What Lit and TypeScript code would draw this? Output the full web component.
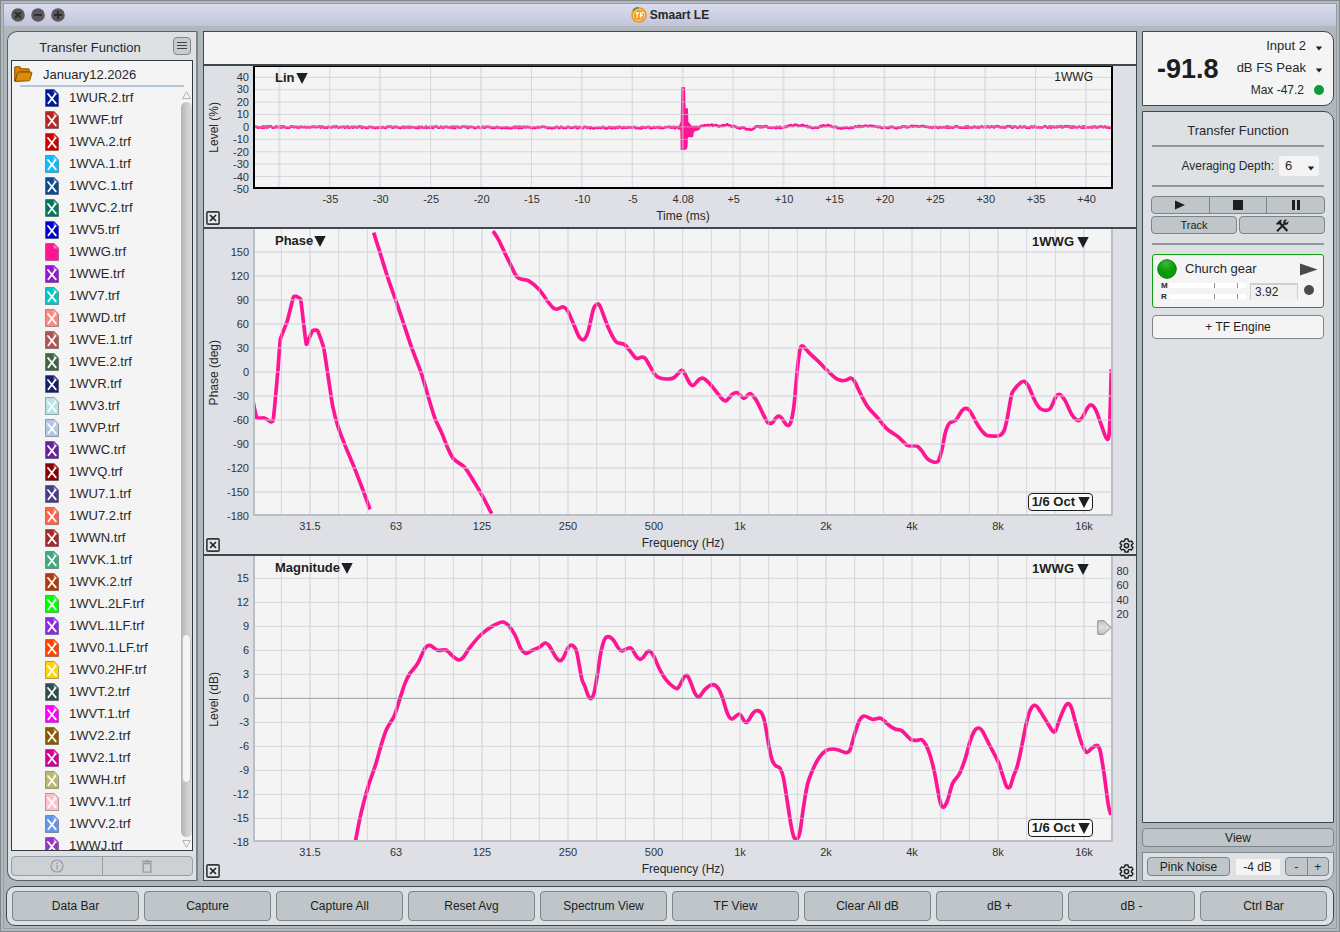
import { LitElement, html, svg, css, nothing } from "lit";
import { customElement, property } from "lit/decorators.js";

type Pt = [number, number];
interface Tick { at: number; label: string; }
interface GridLine { at: number; kind: "major" | "minor" | "zero"; }
interface ChartSpec {
  menu: string;
  yTitle: string;
  xTitle: string;
  w: number;
  h: number;
  xLines: GridLine[];
  yLines: GridLine[];
  xTicks: Tick[];
  yTicks: Tick[];
  rightTicks?: Tick[];
  traces: string[];
  fill?: string;
  impulse?: boolean;
}

/* ---------- trace data ---------- */

const phaseLow: Pt[] = [[-5,521],[5,566],[28,567],[47,578],[54,576],[60,521],[69,421],[76,331],[97,276],[115,205],[123,202],[137,211],[145,276],[154,346],[163,326],[173,305],[188,305],[206,356],[217,426],[233,531],[250,596],[275,661],[300,721],[325,786],[345,841]];
const phaseMid: Pt[] = [[356,11],[375,71],[400,151],[423,216],[440,266],[470,356],[500,436],[525,521],[541,571],[560,611],[580,661],[597,691],[630,716],[660,763],[685,806],[710,854]];
const phaseHigh: Pt[] = [[714,6],[730,31],[750,73],[770,114],[785,143],[800,151],[820,155],[853,182],[875,213],[895,237],[907,240],[925,234],[940,249],[970,319],[980,331],[990,329],[1000,306],[1015,241],[1025,227],[1035,231],[1060,296],[1083,338],[1110,348],[1140,385],[1150,388],[1162,384],[1173,391],[1200,437],[1215,447],[1240,450],[1257,446],[1280,424],[1290,436],[1305,464],[1315,469],[1333,451],[1345,448],[1365,465],[1390,496],[1405,513],[1415,514],[1433,495],[1447,491],[1467,508],[1485,494],[1505,516],[1533,573],[1543,583],[1552,581],[1568,562],[1580,567],[1593,586],[1603,588],[1611,566],[1618,521],[1627,421],[1635,363],[1643,351],[1665,374],[1695,402],[1715,423],[1740,446],[1760,455],[1775,453],[1787,447],[1798,456],[1820,501],[1840,536],[1865,563],[1895,599],[1930,624],[1957,649],[1985,651],[2000,665],[2017,689],[2035,699],[2050,696],[2061,661],[2071,611],[2083,583],[2103,573],[2120,546],[2132,538],[2145,546],[2170,591],[2192,617],[2210,621],[2235,619],[2248,603],[2258,561],[2270,496],[2280,479],[2295,463],[2307,457],[2320,471],[2340,516],[2355,538],[2373,544],[2387,537],[2403,503],[2415,497],[2430,514],[2450,556],[2467,574],[2480,568],[2498,536],[2509,528],[2523,544],[2540,591],[2553,626],[2560,628],[2564,591],[2569,421]];
const magnitude: Pt[] = [[302,852],[318,772],[340,690],[363,622],[380,562],[395,519],[418,479],[435,427],[450,382],[465,352],[487,324],[510,277],[525,268],[548,283],[573,282],[597,304],[612,312],[625,304],[645,274],[680,234],[715,209],[743,198],[760,208],[780,237],[797,277],[813,292],[830,284],[853,274],[870,261],[883,270],[903,304],[915,314],[925,305],[940,274],[952,268],[965,287],[980,367],[990,392],[1000,420],[1008,428],[1017,412],[1027,357],[1037,292],[1048,252],[1060,242],[1075,252],[1090,276],[1100,285],[1127,276],[1145,302],[1155,310],[1165,304],[1177,287],[1187,287],[1197,302],[1215,342],[1235,374],[1257,394],[1268,397],[1280,377],[1288,362],[1298,360],[1308,382],[1320,412],[1332,423],[1350,400],[1372,386],[1390,397],[1403,427],[1417,472],[1430,489],[1453,474],[1467,494],[1477,498],[1495,470],[1507,464],[1520,472],[1530,502],[1542,572],[1552,614],[1562,629],[1575,637],[1585,664],[1595,724],[1608,807],[1617,844],[1627,848],[1635,827],[1645,757],[1657,687],[1673,642],[1693,604],[1714,583],[1733,579],[1750,582],[1773,590],[1785,582],[1798,537],[1813,494],[1827,480],[1853,490],[1877,487],[1900,506],[1920,519],[1940,524],[1967,550],[1985,553],[2000,551],[2013,567],[2025,597],[2038,647],[2053,727],[2060,750],[2068,752],[2078,732],[2093,682],[2113,654],[2130,610],[2145,557],[2158,525],[2170,516],[2182,525],[2205,570],[2230,619],[2245,664],[2255,692],[2265,693],[2275,662],[2287,630],[2300,572],[2313,507],[2325,464],[2338,448],[2350,457],[2375,497],[2392,524],[2401,525],[2415,487],[2430,452],[2440,443],[2450,457],[2465,512],[2480,562],[2495,589],[2510,577],[2525,568],[2535,582],[2547,652],[2560,747],[2568,777]];

/** Cubic spline through the points; a larger tension keeps it closer to straight segments. */
function smooth(p: Pt[], tension = 7): string {
  let d = `M${p[0][0]} ${p[0][1]}`;
  for (let i = 0; i < p.length - 1; i++) {
    const a = p[Math.max(i - 1, 0)], b = p[i], c = p[i + 1], e = p[Math.min(i + 2, p.length - 1)];
    const x1 = b[0] + (c[0] - a[0]) / tension, y1 = b[1] + (c[1] - a[1]) / tension;
    const x2 = c[0] - (e[0] - b[0]) / tension, y2 = c[1] - (e[1] - b[1]) / tension;
    d += `C${x1.toFixed(1)} ${y1.toFixed(1)} ${x2.toFixed(1)} ${y2.toFixed(1)} ${c[0]} ${c[1]}`;
  }
  return d;
}

/** Noise floor of the impulse response, following its slow drift after the peak. */
function noiseFloor(): string {
  const drift: Pt[] = [[0,180],[1330,182],[1345,176],[1360,173],[1375,175],[1390,177],[1415,174],[1435,178],[1450,185],[1465,182],[1487,188],[1505,180],[1530,178],[1550,182],[1590,181],[1610,175],[1645,176],[1675,184],[1700,177],[1720,176],[1750,182],[1775,184],[1800,179],[1850,178],[1880,181],[1925,182],[1975,178],[2040,181],[2100,180],[2568,180]];
  let seed = 7;
  let d = "";
  for (let x = 0; x <= 2568; x += 3) {
    const i = drift.findIndex((q) => q[0] >= x);
    const b = drift[i], a = drift[Math.max(i - 1, 0)];
    const t = b[0] === a[0] ? 0 : (x - a[0]) / (b[0] - a[0]);
    seed = (seed * 1103515245 + 12345) % 2147483648;
    const n = (seed / 2147483648 - 0.5) * 5;
    d += `${d ? "L" : "M"}${x} ${(a[1] + (b[1] - a[1]) * t + n).toFixed(1)}`;
  }
  return d;
}

const range = (n: number) => Array.from({ length: n }, (_, i) => i);
const octaveLines: GridLine[] = range(29).map((k) => ({ at: 79 + 86 * k, kind: k % 3 === 1 ? "major" : "minor" }));
const octaveTicks: Tick[] = ["31.5", "63", "125", "250", "500", "1k", "2k", "4k", "8k", "16k"].map((label, i) => ({ at: 165 + 258 * i, label }));

const impulseChart: ChartSpec = {
  menu: "Lin", yTitle: "Level (%)", xTitle: "Time (ms)", w: 2568, h: 360, impulse: true,
  xLines: range(17).map((k) => ({ at: 73 + 151.25 * k, kind: k % 2 ? "minor" : "major" })),
  yLines: range(9).map((k) => ({ at: 31 + 37.2 * k, kind: "minor" })),
  xTicks: ["-35", "-30", "-25", "-20", "-15", "-10", "-5", "4.08", "+5", "+10", "+15", "+20", "+25", "+30", "+35", "+40"].map((label, i) => ({ at: 226 + 151.25 * i, label })),
  yTicks: range(10).map((k) => ({ at: 32 + 37.2 * k, label: String(40 - 10 * k) })),
  traces: [noiseFloor()],
  fill: "M1272 176 1277 165 1279 60H1290L1292 124H1299L1300 164 1310 176H1330L1333 189 1317 194 1314 211H1299L1297 244 1290 249H1277L1276 190Z",
};
const phaseChart: ChartSpec = {
  menu: "Phase", yTitle: "Phase (deg)", xTitle: "Frequency (Hz)", w: 2568, h: 855,
  xLines: octaveLines,
  yLines: range(11).map((k) => ({ at: 69 + 72 * k, kind: "major" })),
  xTicks: octaveTicks,
  yTicks: range(12).map((k) => ({ at: 69 + 72 * k, label: String(150 - 30 * k) })),
  traces: [smooth(phaseLow, 20), smooth(phaseMid), smooth(phaseHigh)],
};
const magnitudeChart: ChartSpec = {
  menu: "Magnitude", yTitle: "Level (dB)", xTitle: "Frequency (Hz)", w: 2568, h: 852,
  xLines: octaveLines,
  yLines: range(11).map((k) => ({ at: 67 + 72 * k, kind: k === 5 ? "zero" : "minor" })),
  xTicks: octaveTicks,
  yTicks: range(12).map((k) => ({ at: 67 + 72 * k, label: String(15 - 3 * k) })),
  rightTicks: [{ at: 46, label: "80" }, { at: 88, label: "60" }, { at: 132, label: "40" }, { at: 174, label: "20" }],
  traces: [smooth(magnitude)],
};

const files: [string, string][] = [
  ["1WUR.2.trf", "#00189a"], ["1WWF.trf", "#b82525"], ["1WVA.2.trf", "#cf0000"], ["1WVA.1.trf", "#0cbcff"],
  ["1WVC.1.trf", "#0c4a92"], ["1WVC.2.trf", "#00785c"], ["1WV5.trf", "#0000cd"], ["1WWG.trf", "#ff1493"],
  ["1WWE.trf", "#9417d2"], ["1WV7.trf", "#08c4c4"], ["1WWD.trf", "#fc8a84"], ["1WVE.1.trf", "#b05454"],
  ["1WVE.2.trf", "#3f6844"], ["1WVR.trf", "#14206e"], ["1WV3.trf", "#b4e6e6"], ["1WVP.trf", "#b3c6e2"],
  ["1WWC.trf", "#6a1f9e"], ["1WVQ.trf", "#8b0000"], ["1WU7.1.trf", "#483d8b"], ["1WU7.2.trf", "#ff6347"],
  ["1WWN.trf", "#a52a2a"], ["1WVK.1.trf", "#3cab80"], ["1WVK.2.trf", "#b03a08"], ["1WVL.2LF.trf", "#00ff00"],
  ["1WVL.1LF.trf", "#8a2be2"], ["1WV0.1.LF.trf", "#ff4500"], ["1WV0.2HF.trf", "#ffd700"], ["1WVT.2.trf", "#2f4f4f"],
  ["1WVT.1.trf", "#ff00ff"], ["1WV2.2.trf", "#8b5a00"], ["1WV2.1.trf", "#d0009a"], ["1WWH.trf", "#bdb76b"],
  ["1WVV.1.trf", "#ffc0cb"], ["1WVV.2.trf", "#6495ed"], ["1WWJ.trf", "#9932cc"],
];

const base = css`
  *, *::before, *::after { box-sizing: border-box; }
  button, select, input {
    font: inherit; color: inherit; margin: 0; padding: 0; border: 0; background: none; border-radius: 0;
    appearance: none;
  }
  svg { display: block; }
`;

const downTriangle = html`<svg width="12" height="11" viewBox="0 0 12 11" aria-hidden="true"><path d="M.3 0h11.4L6 11z" fill="#1c1e20"/></svg>`;
const caret = html`<svg class="caret" width="8" height="5" viewBox="0 0 8 5" aria-hidden="true"><path d="M.8.6h6.400L4 4.600z" fill="#1c1e20"/></svg>`;

@customElement("chart-panel")
class ChartPanel extends LitElement {
  @property({ attribute: false }) spec!: ChartSpec;

  static styles = [base, css`
    :host {
      display: grid; min-height: 0; background: #dfe0e5; color: #26292c; font-size: 12px; line-height: 14px;
      grid-template: minmax(0, 1fr) 20px 18px / 20px 29px minmax(0, 1fr) 23px;
    }
    .ytitle { writing-mode: vertical-rl; transform: rotate(180deg); place-self: center; white-space: nowrap; }
    .axis { width: 100%; height: 100%; overflow: visible; font-size: 11px; fill: #303336; }
    .yaxis { padding-bottom: 2px; min-height: 0; }
    .right { padding-right: 4px; }
    .plot { position: relative; min-height: 0; background: #f4f4f4; border: 2px solid #bbbec3; border-top: 0; }
    .plot.impulse { border: 2px solid #000; border-top-width: 1px; }
    .graph { width: 100%; height: 100%; overflow: hidden; }
    .trace { fill: none; stroke: #ff1493; stroke-width: 3.7; stroke-linejoin: round; vector-effect: non-scaling-stroke; }
    .impulse .trace { stroke-width: 2.6; }
    .body { fill: #ff1493; }
    .major, .minor, .zero { vector-effect: non-scaling-stroke; }
    .major { stroke: rgba(205, 207, 220, .5); stroke-width: 2; }
    .minor { stroke: rgba(196, 201, 210, .65); stroke-width: 1; }
    .zero { stroke: #9a9fa6; stroke-width: 1; }
    .xaxis { grid-column: 3; padding: 0 2px; }
    .corner { grid-column: 1; place-self: center end; width: 14px; height: 14px; margin-right: 4px; }
    .xtitle { grid-column: 3; justify-self: center; }
    .gear { grid-column: 4; place-self: center end; margin-right: 2px; }
    .menu, .source, .octave { position: absolute; display: flex; align-items: center; gap: 1px; font-size: 13px; line-height: 16px; font-weight: bold; color: #1c1e20; white-space: nowrap; }
    .menu { left: 20px; top: 4px; }
    .source { right: 22px; top: 5px; gap: 3px; }
    .impulse .menu { top: 3px; }
    .impulse .source { right: 18px; top: 2px; font-size: 12px; font-weight: normal; }
    .octave { right: 18px; bottom: 3px; height: 18px; padding: 0 2px 0 3px; gap: 3px; border: 1px solid #1c1e20; border-radius: 4px; background: #fafafa; }
    .marker { position: absolute; right: -1px; top: 64px; }
  `];

  render() {
    const s = this.spec;
    const pct = (v: number, of: number) => `${((v / of) * 100).toFixed(3)}%`;
    return html`
      <div class="ytitle">${s.yTitle}</div>
      <div class="yaxis"><svg class="axis">
        ${s.yTicks.map((t) => svg`<text x="25" y=${pct(t.at, s.h)} dy="4" text-anchor="end">${t.label}</text>`)}
      </svg></div>
      <div class="plot ${s.impulse ? "impulse" : ""}">
        <svg class="graph" viewBox="0 0 ${s.w} ${s.h}" preserveAspectRatio="none" role="img" aria-label="${s.menu} trace">
          ${s.fill ? svg`<path class="body" d=${s.fill}/>` : nothing}
          ${s.traces.map((d) => svg`<path class="trace" d=${d}/>`)}
          ${s.xLines.map((l) => svg`<line class=${l.kind} x1=${l.at} x2=${l.at} y1="0" y2=${s.h}/>`)}
          ${s.yLines.map((l) => svg`<line class=${l.kind} x1="0" x2=${s.w} y1=${l.at} y2=${l.at}/>`)}
        </svg>
        <button class="menu">${s.menu}${downTriangle}</button>
        ${s.impulse
          ? html`<span class="source">1WWG</span>`
          : html`<button class="source">1WWG${downTriangle}</button><button class="octave">1/6 Oct${downTriangle}</button>`}
        ${s.rightTicks ? html`<svg class="marker" width="15" height="15" viewBox="0 0 15 15" aria-hidden="true">
          <defs><linearGradient id="m" x2="0" y2="1"><stop offset="0" stop-color="#c4c6c6"/><stop offset=".5" stop-color="#dcdddd"/><stop offset="1" stop-color="#c2c4c4"/></linearGradient></defs>
          <path d="M.8.8H7l7 6.700L7 14.200H.8z" fill="url(#m)" stroke="#85898a"/></svg>` : nothing}
      </div>
      <div class="yaxis right">${s.rightTicks ? html`<svg class="axis">
        ${s.rightTicks.map((t) => svg`<text x="50%" y=${pct(t.at, s.h)} dy="4" text-anchor="middle">${t.label}</text>`)}
      </svg>` : nothing}</div>
      <div class="xaxis"><svg class="axis">
        ${s.xTicks.map((t) => svg`<text x=${pct(t.at, s.w)} y="14" text-anchor="middle">${t.label}</text>`)}
      </svg></div>
      <button class="corner" aria-label="Close plot"><svg width="14" height="14" viewBox="0 0 14 14"><rect x=".9" y=".9" width="12.200" height="12.200" rx="1.200" fill="#e6e7eb" stroke="#33383b" stroke-width="1.600"/><path d="M4 4l6 6M10 4l-6 6" stroke="#1f2224" stroke-width="1.700"/></svg></button>
      <div class="xtitle">${s.xTitle}</div>
      ${s.impulse ? nothing : html`<button class="gear" aria-label="Plot settings"><svg width="15" height="15" viewBox="0 0 24 24" fill="none" stroke="#1f2224" stroke-width="2.400" stroke-linejoin="round"><path d="M9.700 1.500h4.600l.7 3.100 2 1.200 3.100-1 2.300 4-2.400 2.100v2.200l2.400 2.100-2.300 4-3.100-1-2 1.200-.7 3.100H9.700L9 19.400l-2-1.200-3.100 1-2.300-4L4 13.100v-2.200L1.600 8.800l2.300-4 3.100 1 2-1.200z"/><circle cx="12" cy="12" r="3.400"/></svg></button>`}
    `;
  }
}

@customElement("file-browser")
class FileBrowser extends LitElement {
  static styles = [base, css`
    :host {
      display: flex; flex-direction: column; min-height: 0; padding: 0 3px 4px; background: #dde1e4;
      border: 1px solid #566065; border-right: 2px solid #7c868b; border-radius: 10px 0 0 10px; font-size: 13px; color: #26292c;
    }
    .head { display: flex; align-items: center; height: 28px; padding: 0 2px 0 0; }
    h2 { flex: 1; margin: 0; text-align: center; font-size: 13px; font-weight: normal; line-height: 16px; padding: 3px 4px 0 0; }
    .menu { width: 18px; height: 18px; border: 1px solid #7c868b; border-radius: 4px; background: #c6ccd0; display: grid; place-content: center; }
    .box { flex: 1; min-height: 0; display: flex; flex-direction: column; border: 1px solid #333b3f; background: #f4f4f4; }
    .folder { display: flex; align-items: center; gap: 10px; height: 26px; padding-left: 2px; }
    .folder-wrap::after { content: ""; display: block; height: 2px; margin: -2px 8px 0; background: #b6c6de; }
    .scroller { flex: 1; min-height: 0; display: flex; }
    ul { flex: 1; min-height: 0; overflow: hidden; list-style: none; margin: 0; padding: 0 0 0 33px; }
    li { display: flex; align-items: center; gap: 10px; height: 22px; line-height: 22px; white-space: nowrap; }
    .bar { width: 12px; display: flex; flex-direction: column; align-items: center; padding: 4px 0 2px; gap: 3px; }
    .track { flex: 1; width: 11px; border-radius: 6px; background: linear-gradient(90deg, #b4b4b4, #cfcfcf 60%, #dcdcdc); display: flex; flex-direction: column; align-items: center; }
    .track::before { content: ""; flex: 533; }
    .track::after { content: ""; flex: 54; }
    .thumb { flex: 148; width: 9px; border-radius: 5px; background: #f4f4f4; border: 1px solid #c3c3c3; }
    .actions { display: flex; height: 20px; margin-top: 5px; border: 1px solid #979fa3; border-radius: 4px; background: #ccd1d5; }
    .actions button { flex: 1; display: grid; place-items: center; }
    .actions button + button { border-left: 1px solid #979fa3; }
  `];

  render() {
    return html`
      <div class="head"><h2>Transfer Function</h2>
        <button class="menu" aria-label="Menu"><svg width="10" height="8"><path d="M0 .5h10M0 3.500h10M0 6.500h10" stroke="#3d4447" stroke-width="1"/></svg></button>
      </div>
      <div class="box">
        <div class="folder-wrap"><div class="folder">
          <svg width="19" height="17" viewBox="0 0 19 17" aria-hidden="true"><path d="M.7 15.300V1.600q0-.9.900-.9h4.100q.8 0 .9.900v1.200h7.800q.9 0 .9.900v2.200H5.800q-1 0-1.300.8z" fill="#d98200" stroke="#8a5200" stroke-linejoin="round"/><path d="M1.200 15.500 3.400 7q.3-.9 1.200-.9h12.600q.9 0 .7.900l-2 6.800q-.3.900-1.200 1z" fill="#dd8a0a" stroke="#8a5200" stroke-linejoin="round"/></svg>
          <span>January12.2026</span>
        </div></div>
        <div class="scroller">
          <ul>${files.map(([name, color]) => html`<li>
            <svg width="14" height="18" viewBox="0 0 14 18" aria-hidden="true">
              <path d="M.5.5h8.700l4.300 4.600v12.400H.5z" fill=${color} stroke="#000" stroke-opacity=".3"/>
              <path d="M8.700 1v4.400H13z" fill="#fff" fill-opacity=".45"/>
              ${name === "1WWG.trf" ? nothing : svg`<path d="M3 5l7.800 9.400M10.400 5 3.400 14.200" stroke="#fff" stroke-width="1.800" stroke-linecap="round"/>`}
            </svg><span>${name}</span></li>`)}</ul>
          <div class="bar" aria-hidden="true">
            <svg width="9" height="8"><path d="M4.500.7 8.400 7.500H.6z" fill="none" stroke="#b0b3b5"/></svg>
            <div class="track"><div class="thumb"></div></div>
            <svg width="9" height="8"><path d="M4.500 7.300 8.400.5H.6z" fill="none" stroke="#b0b3b5"/></svg>
          </div>
        </div>
      </div>
      <div class="actions">
        <button aria-label="Info"><svg width="14" height="14" viewBox="0 0 14 14" fill="none" stroke="#979da1" stroke-width="1.200"><circle cx="7" cy="7" r="6"/><path d="M7 6v4.500M7 3.400v1.500"/></svg></button>
        <button aria-label="Delete"><svg width="12" height="13" viewBox="0 0 12 13" fill="none" stroke="#979da1" stroke-width="1.400"><path d="M2.200 3.500h7.600v8.600H2.200zM1 1.500h10M4.500.7h3"/></svg></button>
      </div>`;
  }
}

@customElement("control-column")
class ControlColumn extends LitElement {
  static styles = [base, css`
    :host { display: flex; flex-direction: column; gap: 5px; min-height: 0; font-size: 12px; line-height: 14px; color: #26292c; }
    .meter { display: flex; align-items: center; justify-content: space-between; height: 75px; padding: 0 9px 2px 14px; background: #f4f4f4; border: 1px solid #3f4a4f; border-radius: 0 10px 10px 0; }
    .level { font-size: 27px; line-height: 30px; padding-top: 2px; font-weight: bold; color: #1c1e20; }
    .picks { display: flex; flex-direction: column; align-items: flex-end; }
    .pick { display: flex; align-items: center; height: 22px; gap: 9px; font-size: 13px; }
    .pick select { line-height: 16px; text-align: right; }
    .pick .caret { margin: 5px 1px 0 0; }
    .max { font-size: 12px; gap: 10px; }
    .led { width: 10px; height: 10px; border-radius: 50%; background: #0a9a37; }
    .panel { flex: 1; min-height: 0; display: flex; flex-direction: column; padding: 11px 9px; background: #dde1e4; border: 1px solid #3f4a4f; border-radius: 0 10px 0 0; }
    h2 { margin: 0 0 7px; font-size: 13px; line-height: 15px; font-weight: normal; text-align: center; }
    hr { width: 100%; height: 2px; margin: 0; border: 0; background: #90989c; flex: none; }
    .depth { display: flex; align-items: center; justify-content: flex-end; gap: 5px; height: 20px; margin: 9px 5px; }
    .combo { display: flex; align-items: center; width: 40px; height: 20px; padding: 0 4px 0 6px; border-radius: 3px; background: #f4f4f4; font-size: 13px; }
    .combo select { flex: 1; min-width: 0; }
    .combo .caret { margin-top: 5px; }
    .btn { display: grid; place-items: center; background: #bfc5c9; border: 1px solid #7b858a; border-radius: 4px; color: #1c1e20; }
    .transport { display: flex; height: 18px; margin: 9px -1px 0; background: #bfc5c9; border: 1px solid #7b858a; border-radius: 4px; }
    .transport button { flex: 1; display: grid; place-items: center; }
    .transport button + button { border-left: 1px solid #7b858a; }
    .pair { display: grid; grid-template-columns: 1fr 1fr; gap: 2px; height: 18px; margin: 2px -1px 9px; font-size: 11px; }
    .engine { margin-top: 9px; height: 54px; padding: 4px 5px 0 4px; border: 1px solid #10a010; border-radius: 3px; background: #f4f4f4; }
    .name { display: flex; align-items: center; height: 20px; font-size: 13px; gap: 8px; }
    .name span { flex: 1; }
    .io { display: flex; align-items: center; gap: 4px; height: 24px; padding-left: 4px; }
    .meters { flex: 1; display: grid; grid-template-columns: 8px 1fr; row-gap: 3px; align-items: center; font-size: 8px; line-height: 8px; font-weight: bold; }
    .strip { display: flex; gap: 1px; height: 5px; background: #8d9194; }
    .strip i { background: #fff; flex: 8; }
    .strip i:first-child { flex: 46; }
    .strip i:nth-child(2) { flex: 22; }
    .delay { width: 48px; height: 17px; padding: 0 4px; border: 1px solid #cdd0d1; border-top: 2px solid #cdd0d1; border-bottom: 0; background: #f1f1f1; font-size: 12px; }
    .rec { width: 10px; height: 10px; margin: 0 4px 2px 2px; border-radius: 50%; background: #4a4a4a; }
    .add { flex: none; height: 24px; margin-top: 7px; background: #f4f4f4; }
    .view { flex: none; height: 19px; }
    .noise { display: flex; align-items: center; justify-content: space-between; height: 29px; padding: 0 4px; background: #dde1e4; border: 1px solid #7c868b; border-radius: 0 0 10px 0; }
    .noise .btn { width: 83px; height: 19px; }
    output { width: 44px; line-height: 16px; text-align: center; background: #f4f4f4; }
    .steps { display: flex; width: 44px; height: 19px; background: #bfc5c9; border: 1px solid #7b858a; border-radius: 4px; }
    .steps button { flex: 1; }
    .steps button + button { border-left: 1px solid #7b858a; }
  `];

  render() {
    const strip = html`<div class="strip"><i></i><i></i><i></i></div>`;
    return html`
      <section class="meter">
        <div class="level">-91.8</div>
        <div class="picks">
          <label class="pick"><select aria-label="Input"><option>Input 2</option></select>${caret}</label>
          <label class="pick"><select aria-label="Scale"><option>dB FS Peak</option></select>${caret}</label>
          <div class="pick max">Max -47.2<span class="led"></span></div>
        </div>
      </section>
      <section class="panel">
        <h2>Transfer Function</h2>
        <hr>
        <div class="depth"><label for="avg">Averaging Depth:</label><span class="combo"><select id="avg"><option>6</option></select>${caret}</span></div>
        <hr>
        <div class="transport">
          <button aria-label="Play"><svg width="10" height="10"><path d="M0 .5 10 5 0 9.500z" fill="#1c1e20"/></svg></button>
          <button aria-label="Stop"><svg width="10" height="10"><path d="M0 0h10v10H0z" fill="#1c1e20"/></svg></button>
          <button aria-label="Pause"><svg width="8" height="10"><path d="M0 0h3v10H0zM5 0h3v10H5z" fill="#1c1e20"/></svg></button>
        </div>
        <div class="pair">
          <button class="btn">Track</button>
          <button class="btn" aria-label="Tools"><svg width="14" height="13" viewBox="0 0 14 13"><path d="M4.800 4 12.400 12" stroke="#1c1e20" stroke-width="2.200"/><path d="M1 4.800 3.800 2Q5 .8 7.200.8L6 2.200l.6 1L4 5.800l-.9-.7-1 .9z" fill="#1c1e20"/><path d="M2 12.200 9.600 4.600" stroke="#1c1e20" stroke-width="2"/><path d="M12 .7 10.300 2.400l.2 1.200 1.200.2 1.700-1.700q.5 2-.8 3.100-1.300 1-3 .4L8.300 4.300Q7.800 2.600 9 1.300 10.200.3 12 .7z" fill="#1c1e20"/></svg></button>
        </div>
        <hr>
        <div class="engine">
          <div class="name">
            <svg width="20" height="20" viewBox="0 0 20 20" aria-hidden="true"><defs><radialGradient id="g" cx=".45" cy=".2" r=".5"><stop offset="0" stop-color="#3cb83c"/><stop offset="1" stop-color="#069c06"/></radialGradient></defs><circle cx="10" cy="10" r="9.300" fill="url(#g)" stroke="#0a7c0a"/></svg>
            <span>Church gear</span>
            <svg width="18" height="13"><path d="M0 .5 17.500 6.500 0 12.500z" fill="#4a4a4a"/></svg>
          </div>
          <div class="io">
            <div class="meters"><span>M</span>${strip}<span>R</span>${strip}</div>
            <input class="delay" value="3.92" aria-label="Delay">
            <span class="rec"></span>
          </div>
        </div>
        <button class="btn add">+ TF Engine</button>
      </section>
      <button class="btn view">View</button>
      <section class="noise">
        <button class="btn">Pink Noise</button>
        <output>-4 dB</output>
        <div class="steps"><button>-</button><button>+</button></div>
      </section>`;
  }
}

@customElement("app-root")
class AppRoot extends LitElement {
  static styles = [base, css`
    :host { display: block; height: 100vh; box-sizing: border-box; padding: 2px; border: 1px solid #80888c; background: #b3babf; font-family: "Liberation Sans", Arial, sans-serif; }
    .window { height: 100%; display: flex; flex-direction: column; border: 1px solid #979fa4; background: #b0b8be; }
    header { position: relative; flex: none; height: 22px; display: flex; align-items: center; justify-content: center; background: linear-gradient(#dadcee, #c2c5da); }
    .lights { position: absolute; left: 7px; top: 4px; display: flex; gap: 6px; }
    h1 { display: flex; align-items: center; gap: 3px; margin: 0; font-size: 12px; line-height: 14px; color: #26292c; }
    main { flex: 1; min-height: 0; display: grid; grid-template-columns: 191px minmax(0, 1fr) 192px; gap: 5px; padding: 5px 2px 5px 3px; }
    .charts { min-height: 0; display: grid; grid-template-rows: 34px 161px minmax(0, 327fr) minmax(0, 326fr); border: 1px solid #3f4a4f; background: #f4f4f4; }
    .strip { border-bottom: 2px solid #3f4a4f; }
    .wide { border-top: 2px solid #3f4a4f; }
    footer { flex: none; display: grid; grid-template-columns: repeat(10, minmax(0, 1fr)); gap: 5px; height: 40px; margin: 0 2px 2px; padding: 4px 6px 4px 5px; background: #dde1e4; border: 1px solid #3f4a4f; border-radius: 9px; }
    footer button { background: #bfc5c9; border: 1px solid #7b858a; border-radius: 4px; font-size: 12px; line-height: 14px; color: #1c1e20; }
  `];

  render() {
    const light = (label: string, d: string) => html`<button aria-label=${label}><svg width="14" height="14" viewBox="0 0 14 14"><circle cx="7" cy="7" r="6.800" fill="#5a5a5c"/><path d=${d} stroke="#2c2c2e" stroke-width="1.800"/></svg></button>`;
    return html`<div class="window">
      <header>
        <div class="lights">
          ${light("Close", "M4 4l6 6M10 4l-6 6")}${light("Minimize", "M3 7h8")}${light("Zoom", "M3 7h8M7 3v8")}
        </div>
        <h1><svg width="16" height="16" viewBox="0 0 16 16" aria-hidden="true"><circle cx="8" cy="8" r="7.800" fill="#f09a1e"/><path d="M2 3.500A7.400 7.400 0 0 1 8 .7" stroke="#4f9a4a" stroke-width="1.800" fill="none"/><circle cx="8" cy="8" r="5.600" fill="none" stroke="#fbd493"/><path d="M4.500 6h3.500M6.200 6v5M9.500 11V6h2.700M9.500 8.500h2.200" stroke="#fff" stroke-width="1.300" fill="none"/></svg>Smaart LE</h1>
      </header>
      <main>
        <file-browser></file-browser>
        <div class="charts">
          <div class="strip"></div>
          <chart-panel .spec=${impulseChart}></chart-panel>
          <chart-panel class="wide" .spec=${phaseChart}></chart-panel>
          <chart-panel class="wide" .spec=${magnitudeChart}></chart-panel>
        </div>
        <control-column></control-column>
      </main>
      <footer>
        ${["Data Bar", "Capture", "Capture All", "Reset Avg", "Spectrum View", "TF View", "Clear All dB", "dB +", "dB -", "Ctrl Bar"].map((t) => html`<button>${t}</button>`)}
      </footer>
    </div>`;
  }
}
